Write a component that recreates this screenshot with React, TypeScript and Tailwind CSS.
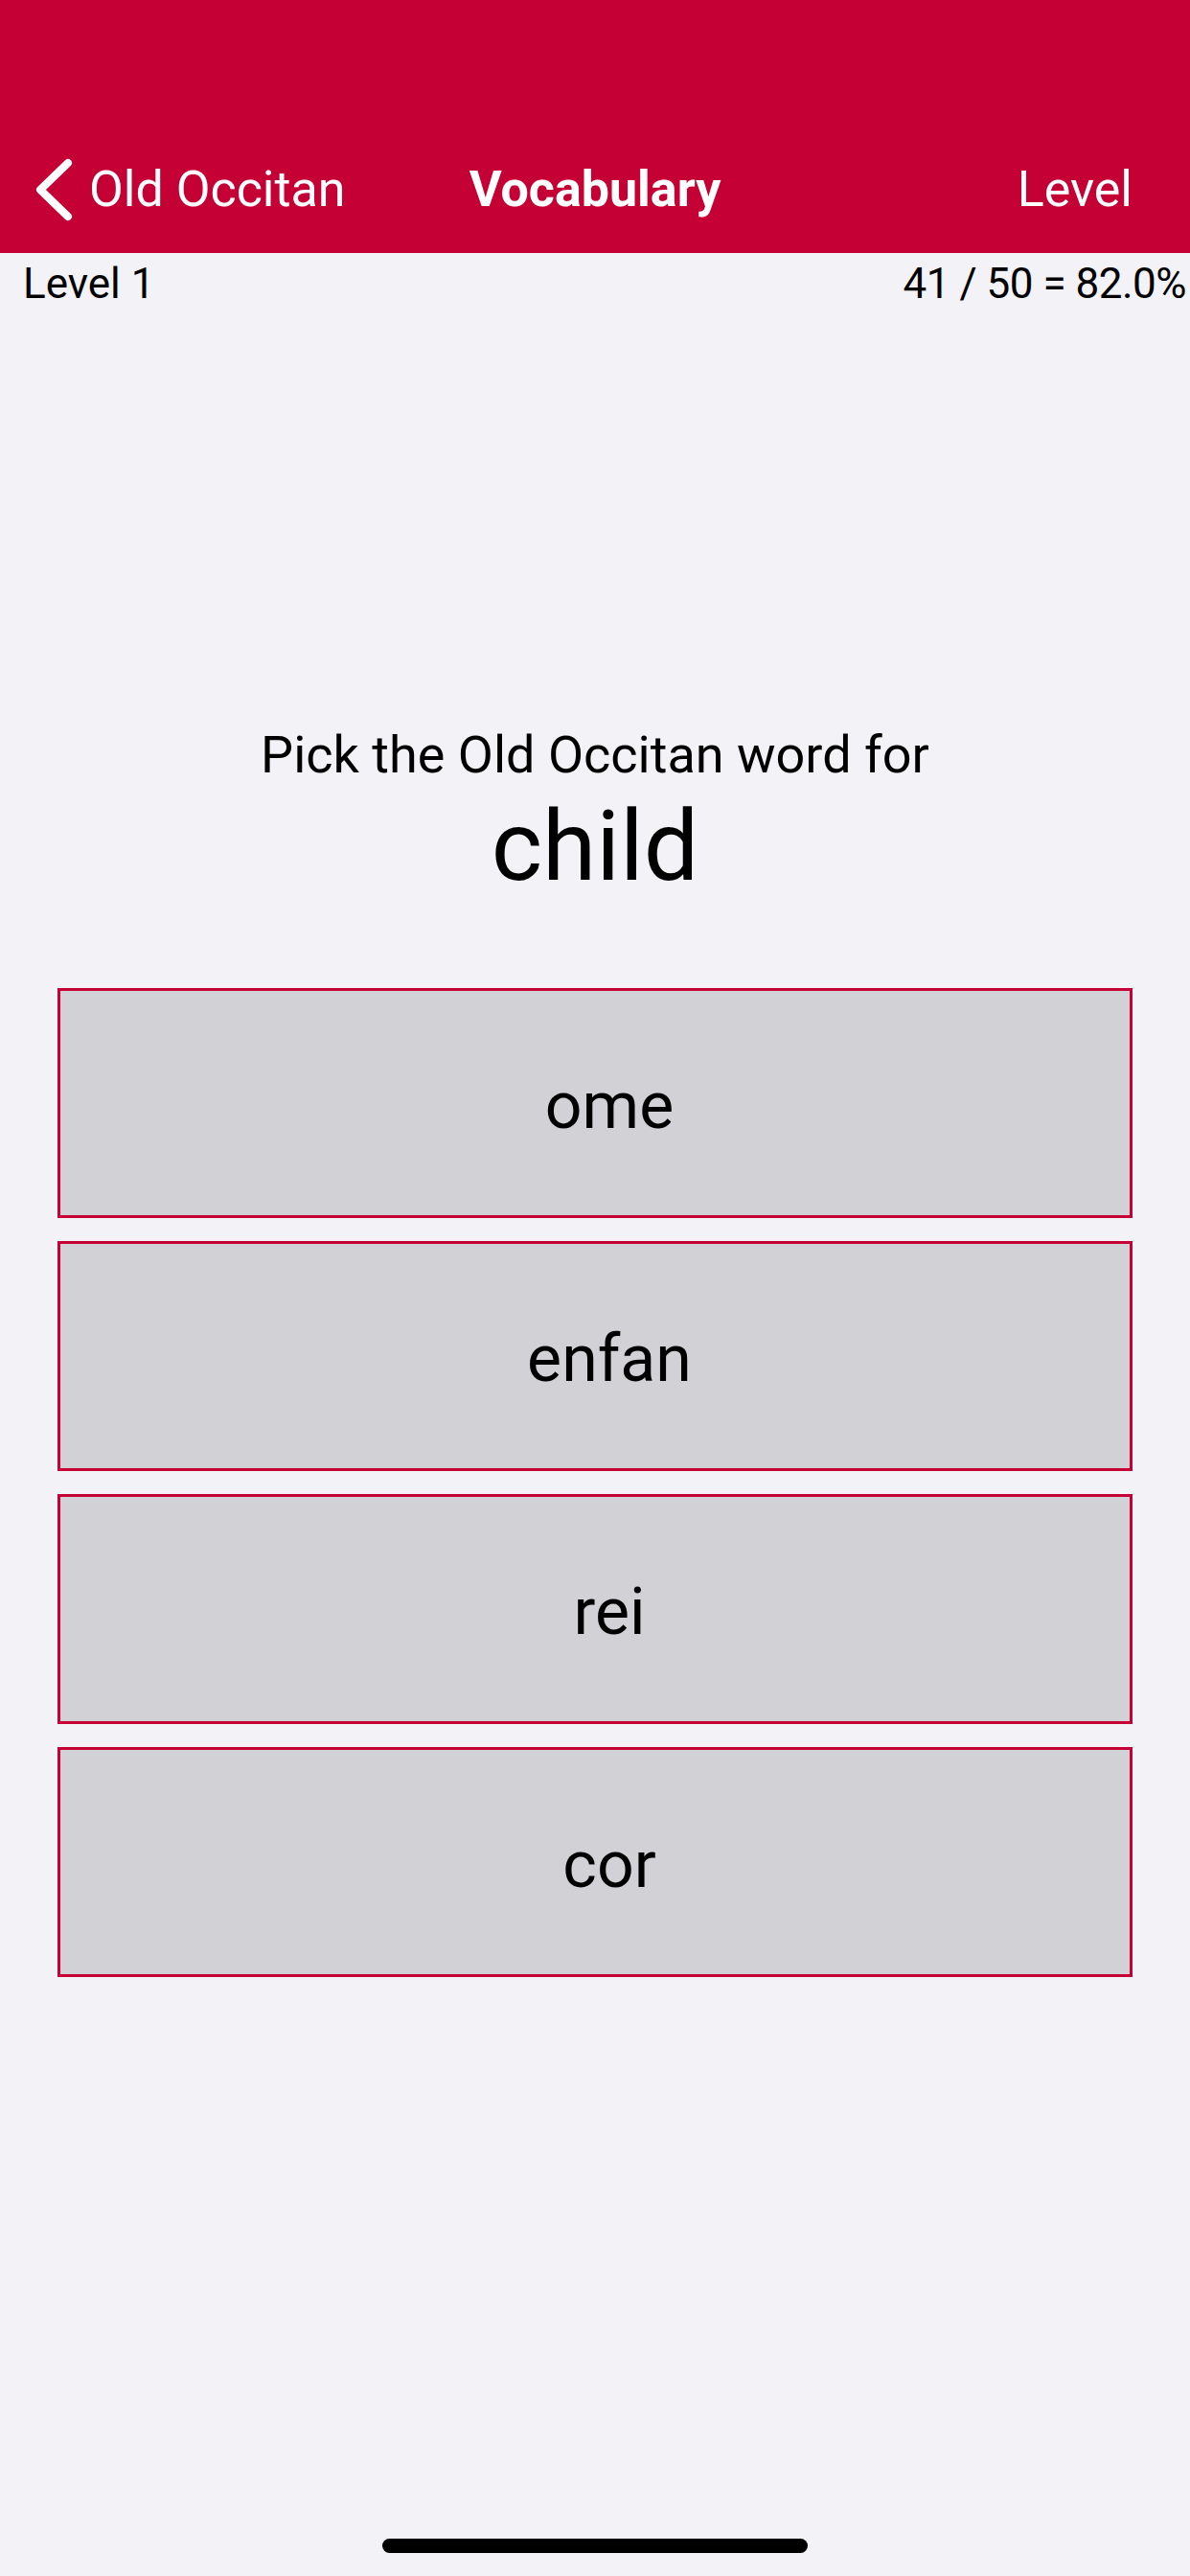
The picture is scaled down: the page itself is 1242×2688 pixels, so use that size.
import React from "react";

export default function App() {
  const options = ["ome", "enfan", "rei", "cor"];
  return (
    <div className="w-[1242px] h-[2688px] bg-[#f2f2f7] flex flex-col font-['Roboto','Liberation_Sans',sans-serif] text-black overflow-hidden">
      <header className="h-[264px] bg-[#c40034] flex flex-col justify-end text-white">
        <div className="h-[132px] grid grid-cols-[1fr_auto_1fr] items-center">
          <div className="flex items-center">
            <svg width="45" height="70" viewBox="0 0 45 70" className="ml-[34px]">
              <path d="M37 7 L8 35 L37 63" fill="none" stroke="white" strokeWidth="8" strokeLinecap="round" strokeLinejoin="round" />
            </svg>
            <span className="ml-[14px] text-[52px] leading-[62px]">Old Occitan</span>
          </div>
          <div className="text-[52px] leading-[62px] font-bold">Vocabulary</div>
          <div className="flex justify-end pr-[60px] text-[52px] leading-[62px]">Level</div>
        </div>
      </header>
      <div className="mt-[6px] flex justify-between pl-[24px] pr-[4px] text-[44px] leading-[53px] whitespace-nowrap">
        <span>Level 1</span>
        <span className="tracking-[-0.5px]">41 / 50 = 82.0%</span>
      </div>
      <div className="mt-[433px] text-center text-[54px] leading-[63px]">Pick the Old Occitan word for</div>
      <div className="mt-[4px] text-center text-[102px] leading-[120px]">child</div>
      <div className="mt-[88px] mx-[60px] flex flex-col gap-[24px]">
        {options.map((o) => (
          <div
            key={o}
            className="h-[240px] border-[3px] border-[#c40034] bg-[#d2d1d6] flex items-center justify-center pl-[30px] pt-[6px] text-[68px] leading-[80px]"
          >
            {o}
          </div>
        ))}
      </div>
      <div className="mt-auto mb-[24px] self-center w-[444px] h-[15px] rounded-full bg-black" />
    </div>
  );
}
